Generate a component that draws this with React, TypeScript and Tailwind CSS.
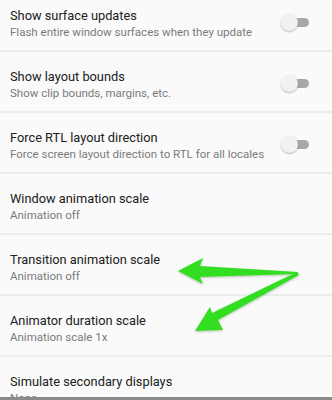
import React from "react";

type Row = { title: string; sub: string; toggle?: boolean };

const rows: Row[] = [
  { title: "Show surface updates", sub: "Flash entire window surfaces when they update", toggle: true },
  { title: "Show layout bounds", sub: "Show clip bounds, margins, etc.", toggle: true },
  { title: "Force RTL layout direction", sub: "Force screen layout direction to RTL for all locales", toggle: true },
  { title: "Window animation scale", sub: "Animation off" },
  { title: "Transition animation scale", sub: "Animation off" },
  { title: "Animator duration scale", sub: "Animation scale 1x" },
  { title: "Simulate secondary displays", sub: "None" },
];

function Toggle() {
  return (
    <div className="relative w-[30px] h-[18px] flex items-center">
      <div className="absolute left-[10px] w-[18px] h-[9px] rounded-full bg-[#a8a8a8]" />
      <div className="absolute left-0 w-[17px] h-[17px] rounded-full bg-[#f1f1f1] shadow-[0_1px_2px_rgba(0,0,0,0.25)]" />
    </div>
  );
}

export default function App() {
  return (
    <div
      className="relative w-[332px] h-[400px] overflow-hidden bg-[#fafafa] border-b-[3px] border-[#8a8a8a]"
      style={{ fontFamily: "Roboto, 'Noto Sans', sans-serif" }}
    >
      <div className="flex flex-col -mt-[9px]">
        {rows.map((r, i) => (
          <div key={i} className="h-[61px] flex items-center justify-between pl-[10px] pr-[21px] border-b-[2px] border-[#ececec] shrink-0">
            <div className="flex flex-col pt-[7px] whitespace-nowrap">
              <div className="text-[12.8px] leading-[16px] text-[#202020]">{r.title}</div>
              <div className="text-[11.5px] leading-[16px] text-[#7a7a7a]">{r.sub}</div>
            </div>
            {r.toggle && (
              <div className="pt-[4px]">
                <Toggle />
              </div>
            )}
          </div>
        ))}
      </div>
      <svg className="absolute left-0 top-0 pointer-events-none" width="332" height="400" viewBox="0 0 332 400">
        <defs>
          <filter id="sh" x="-20%" y="-20%" width="140%" height="140%">
            <feDropShadow dx="0" dy="1" stdDeviation="1" floodColor="#000" floodOpacity="0.25" />
          </filter>
        </defs>
        <g fill="#33dd22" filter="url(#sh)">
          <path d="M178 271 L203 258 L200 266 L298 272 L298 274 L200 277 L203 284 Z" />
          <path d="M195 331 L210 307 L212 313 L297 272 L299 275 L218 320 L223 330 Z" />
        </g>
      </svg>
    </div>
  );
}
